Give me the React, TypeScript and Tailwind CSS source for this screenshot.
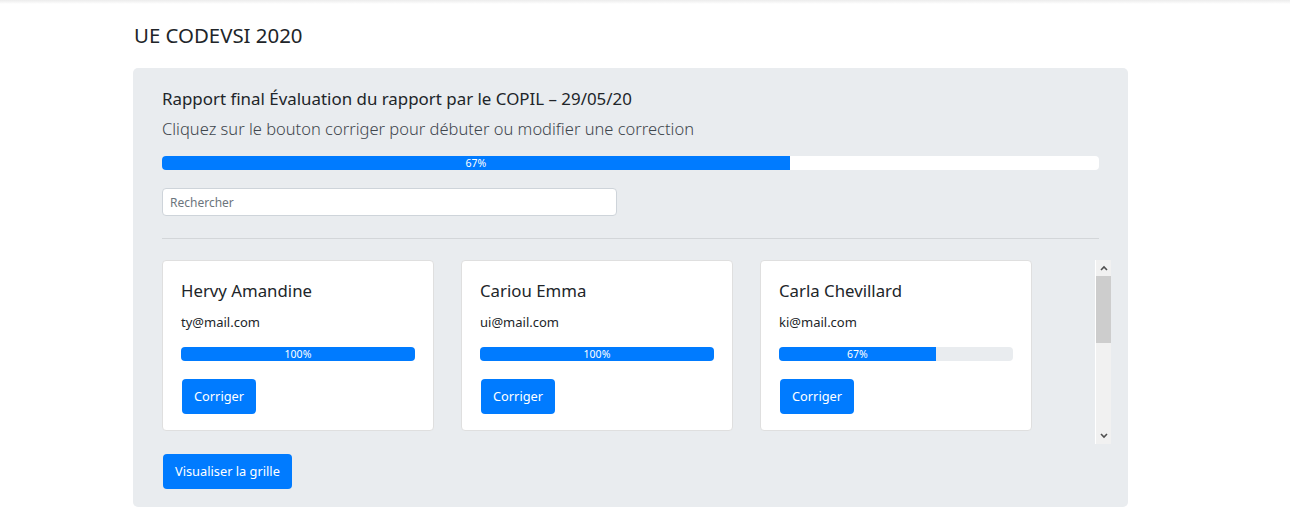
import React from 'react';

const students = [
  { name: 'Hervy Amandine', email: 'ty@mail.com', pct: 100 },
  { name: 'Cariou Emma', email: 'ui@mail.com', pct: 100 },
  { name: 'Carla Chevillard', email: 'ki@mail.com', pct: 67 },
];

const Progress = ({ pct, track }: { pct: number; track: string }) => (
  <div className={`h-[14px] w-full rounded-[4px] overflow-hidden flex ${track}`}>
    <div
      className="h-full bg-[#007bff] text-white text-[10.5px] leading-[14px] text-center"
      style={{ width: `${pct}%` }}
    >
      {pct}%
    </div>
  </div>
);

const StudentCard = ({ name, email, pct }: { name: string; email: string; pct: number }) => (
  <div className="w-[272px] h-[171px] shrink-0 bg-white border border-[#dfdfdf] rounded-[4px] px-[18px] pt-[17px]">
    <h5 className="text-[16.8px] leading-[26px] text-[#212529]">{name}</h5>
    <p className="mt-[9px] text-[13px] leading-[18px] text-[#212529]">{email}</p>
    <div className="mt-[16px]">
      <Progress pct={pct} track="bg-[#e9ecef]" />
    </div>
    <button className="mt-[18px] ml-px h-[35px] px-[12px] rounded-[4px] bg-[#007bff] text-white text-[12.8px]">
      Corriger
    </button>
  </div>
);

const FakeScrollbar = () => (
  <div className="w-[16px] h-full bg-[#f1f1f1] border-l border-white flex flex-col">
    <div className="h-[16px] flex items-center justify-center">
      <svg width="8" height="6" viewBox="0 0 8 6">
        <path d="M1 5 L4 2 L7 5" stroke="#505050" strokeWidth="1.6" fill="none" />
      </svg>
    </div>
    <div className="h-[67px] bg-[#cdcdcd]" />
    <div className="flex-1" />
    <div className="h-[16px] flex items-center justify-center">
      <svg width="8" height="6" viewBox="0 0 8 6">
        <path d="M1 1 L4 4 L7 1" stroke="#505050" strokeWidth="1.6" fill="none" />
      </svg>
    </div>
  </div>
);

export default function App() {
  return (
    <div
      className="min-h-[526px] bg-white text-[#212529]"
      style={{ fontFamily: '"Noto Sans", "Open Sans", sans-serif' }}
    >
      <div className="h-[4px] bg-gradient-to-b from-[#ececec] to-white" />
      <div className="pl-[133px] w-[1128px]">
        <h4 className="mt-[16px] text-[20.4px] leading-[30px] text-[#212529] pl-px">UE CODEVSI 2020</h4>
        <div className="mt-[18px] bg-[#e9ecef] rounded-[5px] px-[29px] pt-[18px] pb-[18px]">
          <h5 className="text-[16.9px] leading-[26px]">
            Rapport final Évaluation du rapport par le COPIL – 29/05/20
          </h5>
          <p className="mt-[5px] text-[16.5px] leading-[24px] font-light text-[#3f464d]">
            Cliquez sur le bouton corriger pour débuter ou modifier une correction
          </p>
          <div className="mt-[15px]">
            <Progress pct={67} track="bg-white" />
          </div>
          <input
            className="mt-[18px] block w-[455px] h-[28px] bg-white border border-[#ced4da] rounded-[4px] px-[7px] text-[12px] placeholder:text-[#6c757d] outline-none"
            placeholder="Rechercher"
          />
          <hr className="mt-[22px] border-t border-[#d3d6d9]" />
          <div className="mt-[21px] h-[184px] flex mr-[-12px]">
            <div className="flex-1 flex gap-[27px] items-start">
              {students.map((s) => (
                <StudentCard key={s.name} {...s} />
              ))}
            </div>
            <FakeScrollbar />
          </div>
          <button className="mt-[10px] ml-px h-[35px] px-[12px] rounded-[4px] bg-[#007bff] text-white text-[12.8px]">
            Visualiser la grille
          </button>
        </div>
      </div>
    </div>
  );
}
